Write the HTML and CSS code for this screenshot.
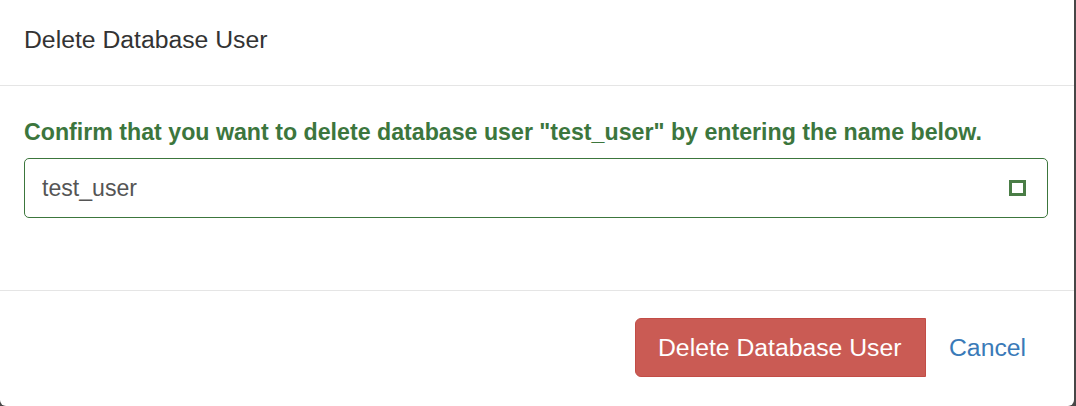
FILE: index.html
```html
<!DOCTYPE html>
<html lang="en">
<head>
<meta charset="utf-8">
<title>Delete Database User</title>
<link rel="stylesheet" href="styles.css">
</head>
<body>
<div class="modal">
  <div class="modal-header">
    <h4 class="modal-title">Delete Database User</h4>
  </div>
  <div class="modal-body">
    <label class="confirm-label" for="confirm-name">Confirm that you want to delete database user "test_user" by entering the name below.</label>
    <div class="input-wrap">
      <input id="confirm-name" class="name-input" type="text" value="test_user">
      <span class="check-icon" aria-hidden="true"></span>
    </div>
  </div>
  <div class="modal-footer">
    <button class="btn btn-danger" type="button">Delete Database User</button>
    <a class="btn btn-link" href="#">Cancel</a>
  </div>
</div>
</body>
</html>
```

FILE: styles.css
```css
html, body {
  margin: 0;
  padding: 0;
}
body {
  background: #474747;
  font-family: "Liberation Sans", Arial, sans-serif;
  width: 1076px;
  height: 406px;
  overflow: hidden;
}
.modal {
  width: 1074px;
  height: 406px;
  background: #ffffff;
  border-radius: 0 0 6px 6px;
  display: flex;
  flex-direction: column;
  box-sizing: border-box;
}
.modal-header {
  padding: 25px 24px 30px;
  border-bottom: 1px solid #e5e5e5;
}
.modal-title {
  margin: 0;
  font-size: 24.75px;
  line-height: 30px;
  font-weight: normal;
  color: #333333;
}
.modal-body {
  padding: 30px 26px 72px 24px;
  display: flex;
  flex-direction: column;
}
.confirm-label {
  display: block;
  font-size: 23.2px;
  line-height: 32px;
  font-weight: bold;
  color: #3c763d;
  margin-bottom: 10px;
  white-space: nowrap;
}
.input-wrap {
  display: flex;
  align-items: center;
  height: 60px;
  box-sizing: border-box;
  border: 1px solid #3c763d;
  border-radius: 5px;
  padding: 0 21px 0 17px;
}
.name-input {
  flex: 1;
  border: 0;
  outline: none;
  padding: 0;
  margin: 0;
  background: transparent;
  font-family: "Liberation Sans", Arial, sans-serif;
  font-size: 23.1px;
  line-height: 30px;
  color: #555555;
}
.check-icon {
  width: 17px;
  height: 16px;
  box-sizing: border-box;
  border: 3px solid #4a7d46;
}
.modal-footer {
  flex: 1;
  border-top: 1px solid #e5e5e5;
  padding: 27px 28px 0 24px;
  display: flex;
  justify-content: flex-end;
  align-items: flex-start;
}
.btn {
  display: inline-flex;
  align-items: center;
  height: 59px;
  box-sizing: border-box;
  padding: 0 22px;
  font-family: "Liberation Sans", Arial, sans-serif;
  font-size: 24.75px;
  line-height: 30px;
  text-decoration: none;
  cursor: pointer;
}
.btn-danger {
  background: #ca5b54;
  color: #ffffff;
  border: 1px solid #c24d46;
  border-radius: 6px 0 0 6px;
  width: 291px;
}
.btn-link {
  color: #3a7ab8;
  border: 1px solid transparent;
  width: 120px;
}
```
